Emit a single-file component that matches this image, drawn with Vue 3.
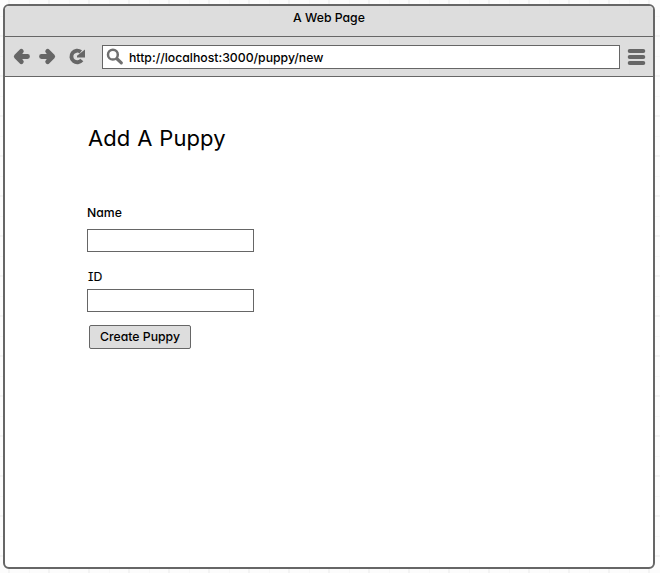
<script setup>
const url = 'http://localhost:3000/puppy/new'
</script>

<template>
  <div class="canvas">
    <div class="window">
      <header class="titlebar"><span class="t-title">A Web Page</span></header>
      <nav class="toolbar">
        <svg class="nav" width="92" height="39" viewBox="0 0 92 39">
          <g fill="none" stroke="#666" stroke-width="4.8" stroke-linecap="round" stroke-linejoin="round">
            <path d="M16.3 14.3 L11.3 19.5 L16.3 24.7 M11.8 19.5 H22.5" />
            <path d="M42.7 14.3 L47.7 19.5 L42.7 24.7 M47.2 19.5 H36.5" />
          </g>
          <path d="M76.8 23 A5.8 5.8 0 1 1 75.8 14.9" fill="none" stroke="#666" stroke-width="3.9" />
          <path d="M80 12.6 V20.4 H72 V18.8 Z" fill="#666" />
        </svg>
        <div class="address">
          <svg class="search" width="18" height="18" viewBox="0 0 18 18">
            <circle cx="6.9" cy="6.7" r="4.9" fill="none" stroke="#707070" stroke-width="2.5" />
            <path d="M11.2 11 L15.3 14.8" stroke="#707070" stroke-width="3.2" stroke-linecap="round" />
          </svg>
          <span class="t-url">{{ url }}</span>
        </div>
        <svg class="menu" width="20" height="39" viewBox="0 0 20 39">
          <path d="M2.7 14 H16.3 M2.7 20 H16.3 M2.7 26 H16.3" stroke="#666" stroke-width="4" stroke-linecap="round" />
        </svg>
      </nav>
      <main class="page">
        <h1 class="t-head">Add A Puppy</h1>
        <label class="name" for="name">Name</label>
        <input id="name" type="text" />
        <label class="id" for="id">ID</label>
        <input id="id" type="text" />
        <button type="button"><span class="t-button">Create Puppy</span></button>
      </main>
    </div>
  </div>
</template>

<style>
body { margin: 0; overflow: hidden; }
</style>

<style scoped>
.canvas {
  box-sizing: border-box;
  width: 660px;
  height: 573px;
  padding: 4px 5px 4px 3px;
  background-color: #fcfcfc;
  background-image:
    linear-gradient(90deg, #f3f3f3 2px, transparent 2px),
    linear-gradient(#f3f3f3 2px, transparent 2px),
    linear-gradient(90deg, #f7f7f7 1px, transparent 1px),
    linear-gradient(#f7f7f7 1px, transparent 1px);
  background-size: 40px 40px;
  background-position: 8px 0, 0 35px, 29px 0, 0 16px;
  font-family: Inter, Lato, sans-serif;
  font-feature-settings: "cv11", "cv08";
  font-size: 12.25px;
  font-weight: 500;
  color: #000;
}
.window {
  box-sizing: border-box;
  width: 652px;
  height: 565px;
  border: 2px solid #666;
  border-radius: 6px;
  background: #fff;
  overflow: hidden;
}
.titlebar {
  box-sizing: border-box;
  height: 31px;
  padding-top: 4px;
  border-bottom: 1px solid #666;
  background: #ddd;
  text-align: center;
  line-height: 16px;
}
.toolbar {
  box-sizing: border-box;
  display: flex;
  align-items: center;
  height: 40px;
  border-bottom: 1px solid #666;
  background: #ddd;
}
.nav { flex: none; margin-right: 5px; }
.address {
  box-sizing: border-box;
  display: flex;
  align-items: center;
  width: 518px;
  height: 24px;
  margin-top: 1px;
  padding-left: 3px;
  border: 1px solid #666;
  background: #fff;
  white-space: nowrap;
}
.search { margin-right: 5px; }
.menu { margin-left: 7px; }
.page {
  display: flex;
  flex-direction: column;
  align-items: flex-start;
  padding: 46px 0 0 82px;
}
h1 {
  margin: 0 0 52px 1px;
  font-size: 22px;
  font-weight: 400;
  letter-spacing: 0.1px;
  word-spacing: 0.5px;
  line-height: 30px;
  white-space: nowrap;
}
label { height: 16px; line-height: 16px; }
.id { margin-left: 1px; font-weight: 400; -webkit-text-stroke: 0.15px #000; }
input {
  box-sizing: border-box;
  width: 167px;
  height: 23px;
  margin: 8px 0 17px;
  padding: 0 4px;
  border: 1px solid #666;
  background: #fff;
  font: inherit;
}
#id { margin: 4px 0 13px; }
button {
  box-sizing: border-box;
  width: 102px;
  height: 24px;
  margin-left: 2px;
  padding: 0;
  border: 1px solid #666;
  border-radius: 2px;
  background: #ddd;
  font: inherit;
  font-feature-settings: inherit;
  color: inherit;
  line-height: 22px;
  white-space: nowrap;
}
</style>
